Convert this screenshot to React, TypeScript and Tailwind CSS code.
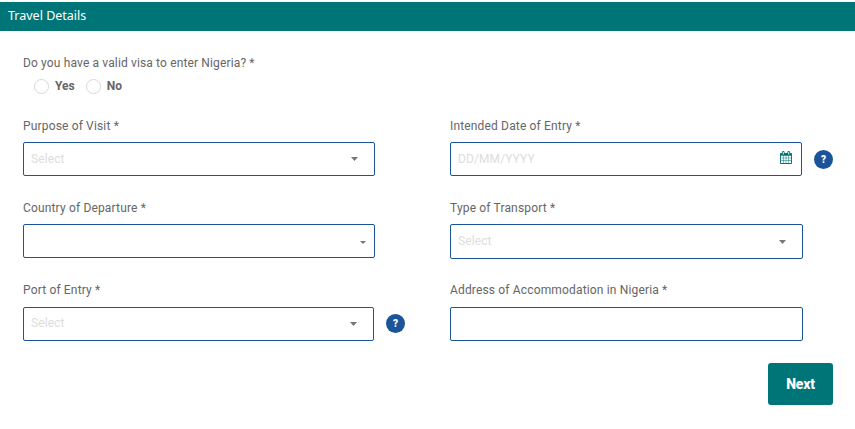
import { useState } from "react"
import type { ReactNode } from "react"

function Caret({ small }: { small?: boolean }) {
  return (
    <svg className={small ? "mt-[3px] w-1.5 h-[3px]" : "w-[7px] h-1"} viewBox="0 0 8 4" preserveAspectRatio="none" fill="#777777">
      <path d="M0 0h8L4 4z" />
    </svg>
  )
}

function CalendarIcon() {
  return (
    <svg className="mb-[3px] w-3 h-[13px]" viewBox="64 0 1664 1792" fill="#007577">
      <path d="M192 1664h288v-288h-288v288zm352 0h320v-288h-320v288zm-352-352h288v-320h-288v320zm352 0h320v-320h-320v320zm-352-384h288v-288h-288v288zm736 736h320v-288h-320v288zm-384-736h320v-288h-320v288zm768 736h288v-288h-288v288zm-384-352h320v-320h-320v320zm-352-864v-288q0-13-9.500-22.500t-22.500-9.500h-64q-13 0-22.500 9.500t-9.500 22.500v288q0 13 9.500 22.500t22.500 9.500h64q13 0 22.500-9.500t9.500-22.500zm736 864h288v-320h-288v320zm-384-384h320v-288h-320v288zm384 0h288v-288h-288v288zm32-480v-288q0-13-9.500-22.500t-22.500-9.500h-64q-13 0-22.500 9.500t-9.500 22.500v288q0 13 9.500 22.500t22.500 9.500h64q13 0 22.500-9.500t9.500-22.500zm384-64v1280q0 52-38 90t-90 38h-1408q-52 0-90-38t-38-90v-1280q0-52 38-90t90-38h128v-96q0-66 47-113t113-47h64q66 0 113 47t47 113v96h384v-96q0-66 47-113t113-47h64q66 0 113 47t47 113v96h128q52 0 90 38t38 90z" />
    </svg>
  )
}

function Help() {
  return (
    <button className="block size-[19px] shrink-0 rounded-full bg-[#1b5499] text-white text-[10px] leading-[19px] font-black text-center">
      ?
    </button>
  )
}

function Field({ label, className = "gap-1.5", children }: { label: string; className?: string; children: ReactNode }) {
  return (
    <div className={`flex flex-col ${className}`}>
      <label className="h-5 text-xs leading-5 tracking-[0.16px]">{label}</label>
      <div className="flex items-start gap-3">{children}</div>
    </div>
  )
}

const box = "flex items-center justify-between border border-[#1b5499] rounded-[2px] pl-[7px] text-xs tracking-[0.1px] text-[#dddddd]"

export default function App() {
  const [visa, setVisa] = useState("")
  const [address, setAddress] = useState("")

  return (
    <div className="h-[429px] bg-white pt-0.5 font-[Roboto,sans-serif] text-[#666666]">
      <h1 className="h-[29px] bg-[#007577] pl-2 font-['Noto_Sans',sans-serif] text-[12.5px] leading-[27px] text-white">
        Travel Details
      </h1>

      <div className="pl-[23px] pr-[22px] pt-[22px]">
        <p className="h-5 text-xs leading-5 tracking-[0.14px]">Do you have a valid visa to enter Nigeria? *</p>
        <div className="flex h-[26px] items-center gap-[11px] pl-[11px]">
          {["Yes", "No"].map(option => (
            <label key={option} className="flex items-center gap-1.5 text-xs leading-5 font-bold">
              <input
                type="radio"
                name="visa"
                className="size-[15px] appearance-none rounded-full border border-[#d8d8d8] checked:border-[5px] checked:border-[#007577]"
                checked={visa === option}
                onChange={() => setVisa(option)}
              />
              {option}
            </label>
          ))}
        </div>

        <div className="mt-[17px] grid grid-cols-[427px_383px] grid-rows-[60px_61px_61px] gap-y-[22px]">
          <Field label="Purpose of Visit *">
            <div className={`${box} w-[352px] h-[34px] pr-4`}>
              <span>Select</span>
              <Caret />
            </div>
          </Field>
          <Field label="Intended Date of Entry *">
            <div className={`${box} w-[352px] h-[34px] pr-[9px]`}>
              <span>DD/MM/YYYY</span>
              <CalendarIcon />
            </div>
            <div className="pt-2">
              <Help />
            </div>
          </Field>

          <Field label="Country of Departure *">
            <div className={`${box} w-[352px] h-[34px] pr-2`}>
              <span />
              <Caret small />
            </div>
          </Field>
          <Field label="Type of Transport *">
            <div className={`${box} w-[353px] h-[35px] pr-4`}>
              <span className="pb-px">Select</span>
              <Caret />
            </div>
          </Field>

          <Field label="Port of Entry *" className="-mt-px gap-[7px]">
            <div className={`${box} w-[351px] h-[34px] pr-4`}>
              <span className="pb-0.5">Select</span>
              <Caret />
            </div>
            <div className="pt-[7px]">
              <Help />
            </div>
          </Field>
          <Field label="Address of Accommodation in Nigeria *" className="-mt-px gap-[7px]">
            <input
              className="w-[353px] h-[34px] border border-[#1b5499] rounded-[2px] px-[7px] text-xs outline-none"
              value={address}
              onChange={e => setAddress(e.target.value)}
            />
          </Field>
        </div>

        <div className="mt-[21px] flex justify-end">
          <button className="w-[65px] h-[42px] rounded-[3px] bg-[#007577] text-sm font-extrabold tracking-[-0.2px] text-white">Next</button>
        </div>
      </div>
    </div>
  )
}
